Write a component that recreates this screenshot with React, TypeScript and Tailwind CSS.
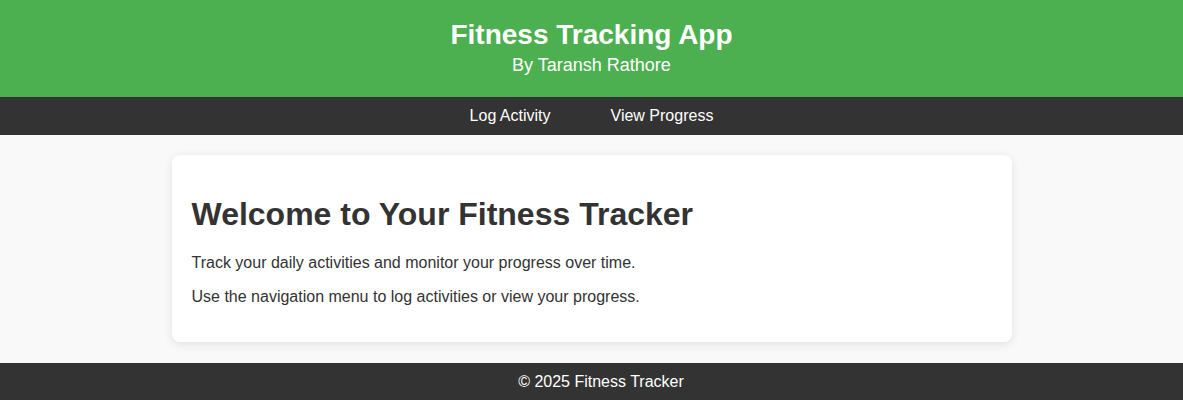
export default function App() {
  const links = ["Log Activity", "View Progress"];

  return (
    <div className="min-h-[400px] flex flex-col bg-[#f9f9f9] text-[#333] font-['Liberation_Sans',Arial,sans-serif]">
      <header className="bg-[#4caf50] text-white text-center pt-[19px] pb-[21px]">
        <h1 className="text-[28px] leading-[32px] font-bold">Fitness Tracking App</h1>
        <p className="text-[18px] leading-[21px] mt-[4px]">By Taransh Rathore</p>
      </header>

      <nav className="bg-[#333] flex justify-center gap-[60px] py-[10px]">
        {links.map((label) => (
          <a key={label} href="#" className="text-white text-base leading-[18px]">
            {label}
          </a>
        ))}
      </nav>

      <main className="flex-1 px-4 pt-5 pb-[21px]">
        <section className="max-w-[840px] mx-auto bg-white rounded-lg shadow-[0_2px_10px_rgba(0,0,0,0.1)] p-5">
          <h2 className="text-[32px] leading-[37px] font-bold mt-[21px] mb-[21px]">
            Welcome to Your Fitness Tracker
          </h2>
          <p className="text-base leading-[18px] mb-4">
            Track your daily activities and monitor your progress over time.
          </p>
          <p className="text-base leading-[18px] mb-4">
            Use the navigation menu to log activities or view your progress.
          </p>
        </section>
      </main>

      <footer className="bg-[#333] text-white text-center text-base leading-[18px] py-[10px] pl-[19px]">
        © 2025 Fitness Tracker
      </footer>
    </div>
  );
}
